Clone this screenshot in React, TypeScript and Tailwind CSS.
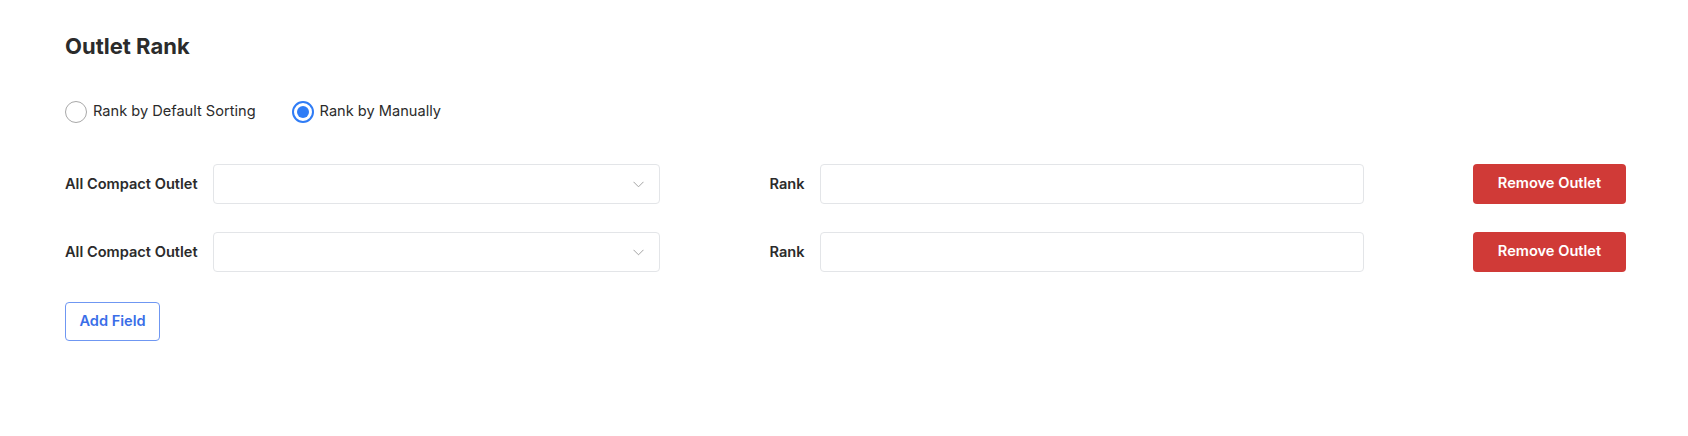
import { useState } from 'react';

const rows = [1, 2];

const Radio = ({ checked, label, onClick }: { checked: boolean; label: string; onClick: () => void }) => (
    <label className="flex items-center gap-[6px] cursor-pointer" onClick={onClick}>
        {checked ? (
            <span className="w-[22px] h-[22px] rounded-full border-2 border-[#2f7cf6] flex items-center justify-center">
                <span className="w-[12px] h-[12px] rounded-full bg-[#2f7cf6]" />
            </span>
        ) : (
            <span className="w-[22px] h-[22px] rounded-full border-[1.5px] border-[#a8a8a8]" />
        )}
        <span className="text-[14.6px] text-[#2b2b2b]">{label}</span>
    </label>
);

const App = () => {
    const [mode, setMode] = useState('manual');

    return (
        <div className="bg-white min-h-[436px] pl-[65px] pr-[62px] pt-[32px] font-['Inter',sans-serif]">
            <h2 className="text-[22px] font-bold text-[#2b2b2b] leading-[28px]">Outlet Rank</h2>

            <div className="flex items-center gap-[36px] mt-[41px]">
                <Radio checked={mode === 'default'} label="Rank by Default Sorting" onClick={() => setMode('default')} />
                <Radio checked={mode === 'manual'} label="Rank by Manually" onClick={() => setMode('manual')} />
            </div>

            <div className="mt-[41px] flex flex-col gap-[28px]">
                {rows.map((r) => (
                    <div key={r} className="flex items-center justify-between">
                        <div className="flex items-center gap-[15px] w-[595px]">
                            <span className="text-[14.6px] font-semibold text-[#2b2b2b] whitespace-nowrap pt-[2px]">All Compact Outlet</span>
                            <div className="flex-1 h-[40px] border border-[#e3e5e8] rounded-[4px] flex items-center justify-end pr-[15px]">
                                <svg width="11" height="7" viewBox="0 0 11 7" fill="none">
                                    <path d="M0.5 0.8L5.5 5.8L10.5 0.8" stroke="#a3a3a3" strokeWidth="1" />
                                </svg>
                            </div>
                        </div>
                        <div className="flex items-center gap-[15px] w-[594px]">
                            <span className="text-[14.6px] font-semibold text-[#2b2b2b] pt-[2px]">Rank</span>
                            <input className="flex-1 h-[40px] border border-[#e3e5e8] rounded-[4px] outline-none px-3" />
                        </div>
                        <button className="w-[153px] h-[40px] bg-[#d03a37] rounded-[4px] text-white text-[14.6px] font-semibold">
                            Remove Outlet
                        </button>
                    </div>
                ))}
            </div>

            <button className="mt-[30px] w-[95px] h-[39px] border border-[#6f97f2] rounded-[4px] text-[#3a6ee8] text-[14.6px] font-semibold">
                Add Field
            </button>
        </div>
    );
};

export default App;
